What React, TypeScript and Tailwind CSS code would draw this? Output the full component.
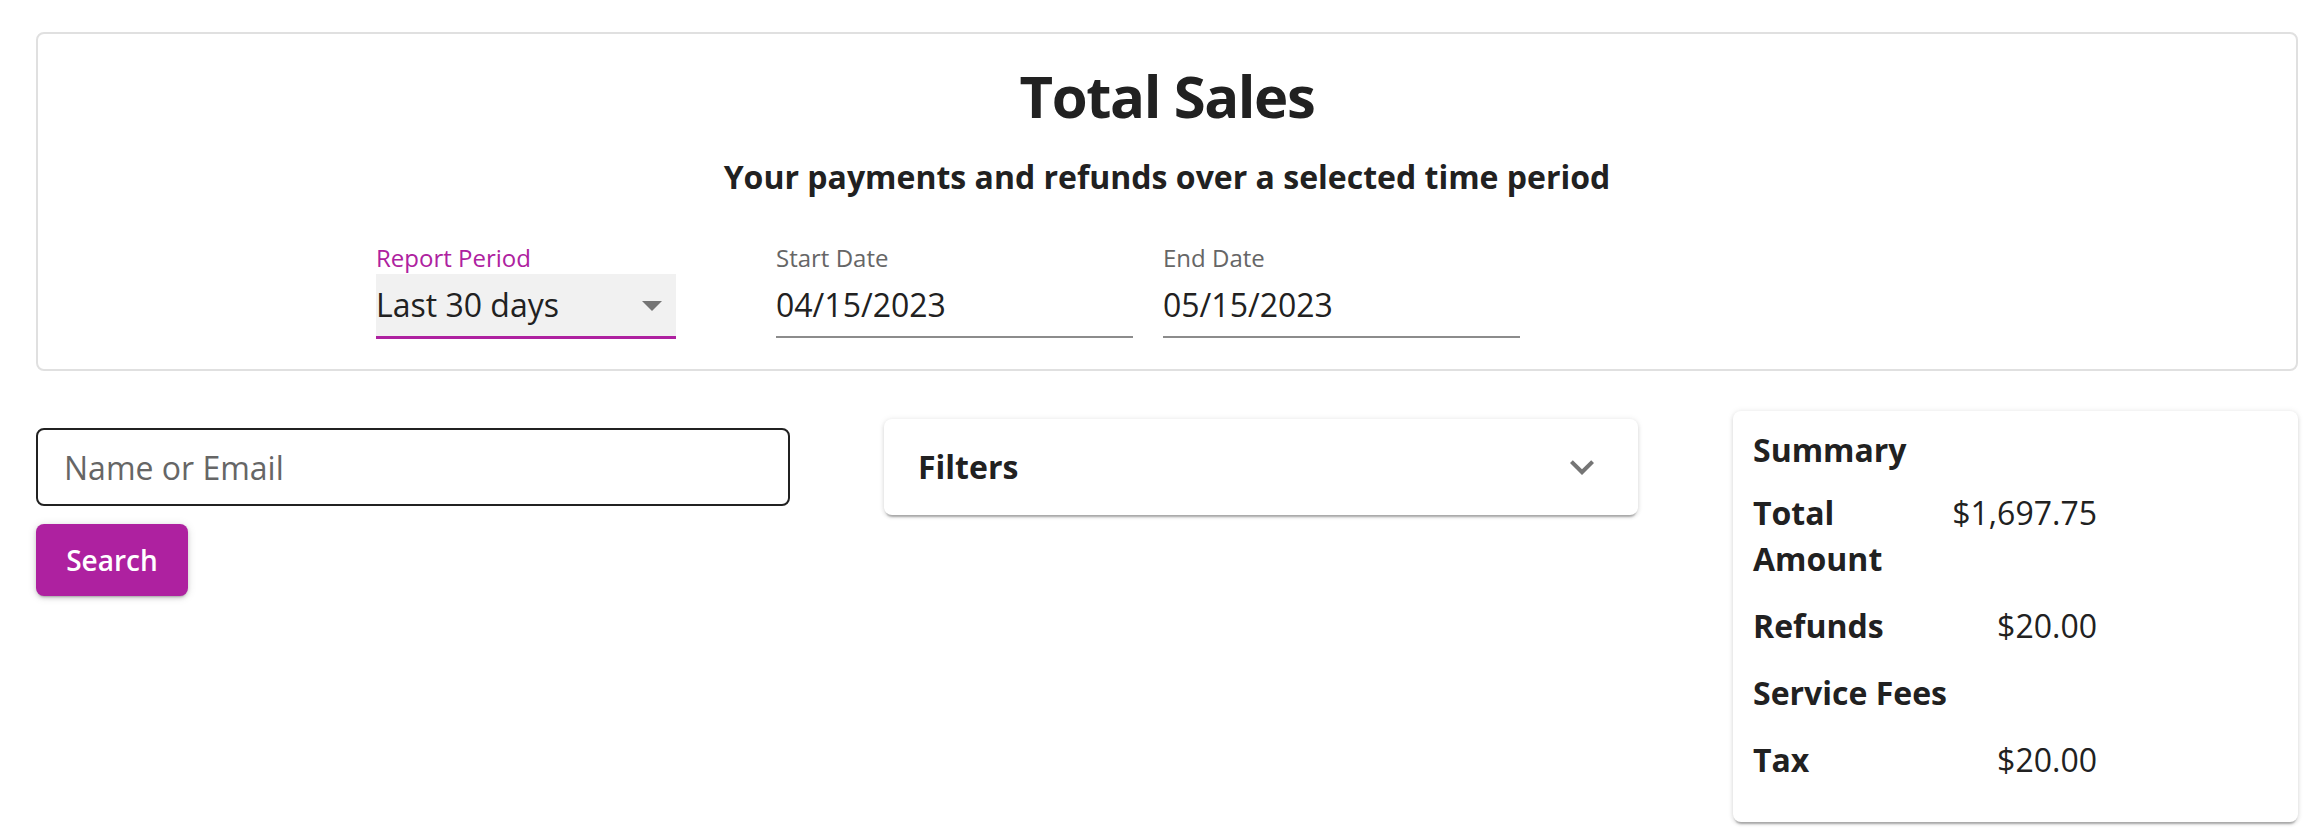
import { useState } from 'react';

const rows: { label: string; value: string }[] = [
  { label: 'Total Amount', value: '$1,697.75' },
  { label: 'Refunds', value: '$20.00' },
  { label: 'Service Fees', value: '' },
  { label: 'Tax', value: '$20.00' },
];

function ArrowDropDown() {
  return (
    <svg width="48" height="48" viewBox="0 0 24 24" className="fill-[#757575]">
      <path d="M7 10l5 5 5-5z" />
    </svg>
  );
}

function ExpandMore() {
  return (
    <svg width="48" height="48" viewBox="0 0 24 24" className="fill-[#757575]">
      <path d="M16.59 8.59 12 13.17 7.41 8.59 6 10l6 6 6-6z" />
    </svg>
  );
}

function DateField({ label, value }: { label: string; value: string }) {
  return (
    <div className="flex w-[357px] flex-col">
      <label className="text-[24px] leading-[30px] text-[#666666]">{label}</label>
      <div className="mt-px flex h-[64px] items-center border-b-2 border-[#8c8c8c] text-[32px] leading-[48px] text-[#212121]">
        {value}
      </div>
    </div>
  );
}

export default function App() {
  const [query, setQuery] = useState('');

  return (
    <div className="min-h-screen bg-white pt-[32px] pr-[24px] pl-[36px] font-['Open_Sans',sans-serif] text-[#212121]">
      {/* Header card */}
      <div className="w-[2262px] rounded-[8px] border-2 border-[#e0e0e0] pt-[25px] pb-[30px]">
        <h1 className="text-center text-[58px] leading-[74px] font-bold tracking-[-1.4px]">Total Sales</h1>
        <p className="mt-[19px] text-center text-[32px] leading-[49px] font-bold">
          Your payments and refunds over a selected time period
        </p>

        <div className="mt-[42px] flex items-start pl-[338px]">
          <div className="flex w-[300px] flex-col">
            <label className="text-[24px] leading-[30px] text-[#ae21a0]">Report Period</label>
            <div className="mt-px flex h-[65px] items-center justify-between border-b-[3px] border-[#ae21a0] bg-[#f1f1f1] text-[32px] leading-[48px]">
              <span>Last 30 days</span>
              <ArrowDropDown />
            </div>
          </div>
          <div className="ml-[100px] flex gap-[30px]">
            <DateField label="Start Date" value="04/15/2023" />
            <DateField label="End Date" value="05/15/2023" />
          </div>
        </div>
      </div>

      {/* Bottom row */}
      <div className="mt-[40px] flex w-[2262px] items-start">
        <div className="mt-[17px] flex w-[754px] shrink-0 flex-col items-start gap-[18px]">
          <input
            value={query}
            onChange={(e) => setQuery(e.target.value)}
            placeholder="Name or Email"
            className="h-[78px] w-full rounded-[8px] border-2 border-[#212121] px-[26px] text-[32px] text-[#212121] outline-none placeholder:text-[#666666]"
          />
          <button className="h-[72px] w-[152px] rounded-[8px] bg-[#ae21a0] text-[28px] font-semibold text-white shadow-[0_3px_2px_-2px_rgba(0,0,0,0.2),0_2px_4px_rgba(0,0,0,0.14),0_1px_10px_rgba(0,0,0,0.12)]">
            Search
          </button>
        </div>

        <div className="mt-[8px] ml-[94px] flex h-[96px] w-[754px] shrink-0 items-center justify-between rounded-[8px] bg-white pr-[32px] pl-[34px] shadow-[0_4px_2px_-2px_rgba(0,0,0,0.25),0_2px_4px_rgba(0,0,0,0.12),0_0_6px_rgba(0,0,0,0.08)]">
          <span className="text-[32px] font-bold">Filters</span>
          <ExpandMore />
        </div>

        <div className="ml-[95px] w-[565px] shrink-0 rounded-[8px] bg-white pt-[16px] pb-[39px] pl-[20px] shadow-[0_4px_2px_-2px_rgba(0,0,0,0.25),0_2px_4px_rgba(0,0,0,0.12),0_0_6px_rgba(0,0,0,0.08)]">
          <div className="text-[32px] leading-[46px] font-bold">Summary</div>
          <div className="mt-[17px] grid grid-cols-[198px_146px] gap-y-[21px]">
            {rows.map((r) => (
              <div key={r.label} className="contents">
                <div className="text-[32px] leading-[46px] font-bold">{r.label}</div>
                <div className="text-right text-[32px] leading-[46px]">{r.value}</div>
              </div>
            ))}
          </div>
        </div>
      </div>
    </div>
  );
}
